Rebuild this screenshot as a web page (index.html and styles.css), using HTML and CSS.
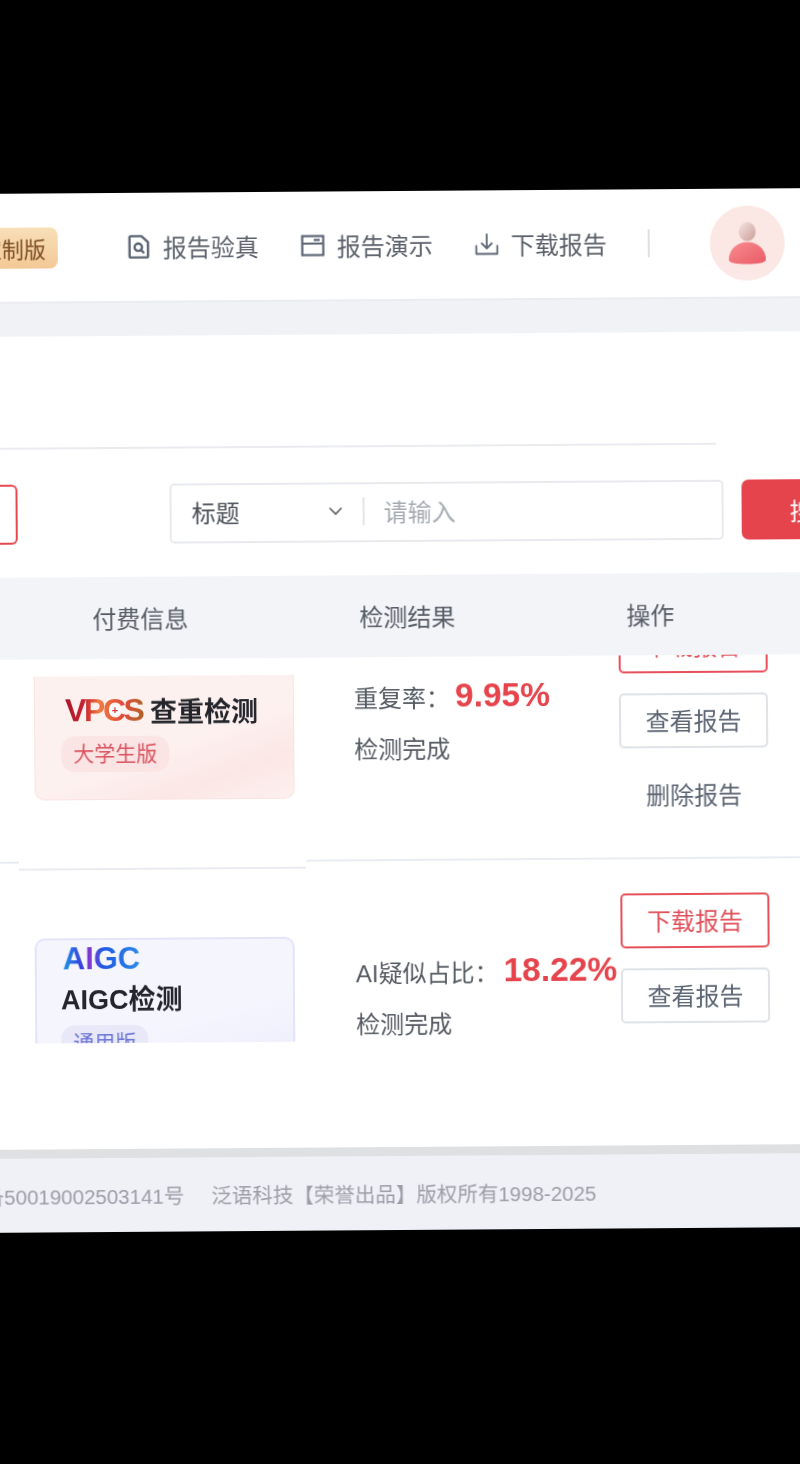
FILE: index.html
```html
<!DOCTYPE html>
<html lang="zh-CN">
<head>
<meta charset="utf-8">
<title>检测报告</title>
<link rel="stylesheet" href="styles.css">
</head>
<body>
<div class="frame">
  <header class="header">
    <div class="badge"><span>定制版</span></div>
    <nav class="nav">
      <a class="nav-item">
        <svg class="icon" viewBox="0 0 24 26" fill="none" stroke="#5d6675" stroke-width="2.600" stroke-linejoin="round" stroke-linecap="round"><path d="M3.500 1.500h11.500l7 6.500v15a1.500 1.500 0 0 1-1.500 1.500h-17A1.500 1.500 0 0 1 2 23V3a1.500 1.500 0 0 1 1.500-1.500z"/><circle cx="11.500" cy="13.500" r="4"/><path d="M14.500 16.500l2.500 2.500"/></svg>
        <span>报告验真</span>
      </a>
      <a class="nav-item">
        <svg class="icon" viewBox="0 0 24 22" fill="none" stroke="#5d6675" stroke-width="2.200"><rect x="1.500" y="1.500" width="21" height="19"/><path d="M1.500 9h21M13 5.300h6"/></svg>
        <span>报告演示</span>
      </a>
      <a class="nav-item">
        <svg class="icon" viewBox="0 0 24 22" fill="none" stroke="#5d6675" stroke-width="1.800" stroke-linecap="round" stroke-linejoin="round"><path d="M12 1v13.500M7 10l5 5 5-5M1.500 12.500v8h21v-8"/></svg>
        <span>下载报告</span>
      </a>
    </nav>
    <div class="nav-divider"></div>
    <div class="avatar">
      <svg viewBox="0 0 75 75" class="avatar-art">
        <defs>
          <linearGradient id="head" x1="0" y1="0" x2="1" y2="1"><stop offset="0" stop-color="#f6e6e2"/><stop offset="1" stop-color="#c99c98"/></linearGradient>
          <linearGradient id="bodyg" x1="0" y1="0" x2="1" y2="1"><stop offset="0" stop-color="#f78d8f"/><stop offset="1" stop-color="#ea5a66"/></linearGradient>
        </defs>
        <ellipse cx="37.500" cy="26" rx="8.500" ry="9.500" fill="url(#head)"/>
        <path d="M19 54C19 44 27 36.500 37.500 36.500S56 44 56 54C56 57.500 48 58.500 37.500 58.500S19 57.500 19 54z" fill="url(#bodyg)"/>
      </svg>
    </div>
  </header>
  <div class="band"></div>
  <section class="panel">
    <div class="title-area"></div>
    <div class="filters">
      <div class="status-box"></div>
      <div class="search-box">
        <div class="select"><span>标题</span>
          <svg class="chevron" viewBox="0 0 14 9" fill="none" stroke="#555b63" stroke-width="1.600"><path d="M1 1.500l6 6 6-6"/></svg>
        </div>
        <div class="input-divider"></div>
        <span class="placeholder">请输入</span>
      </div>
      <button class="search-btn">搜索</button>
    </div>
    <div class="thead">
      <span class="th">付费信息</span>
      <span class="th">检测结果</span>
      <span class="th">操作</span>
    </div>
    <div class="tbody">
      <article class="row row-first">
        <div class="col-card">
          <div class="card card-red">
            <div class="card-title-line">
              <span class="logo-vpcs">VPCS<i class="logo-plus">+</i></span>
              <span class="card-title">查重检测</span>
            </div>
            <span class="pill pill-red">大学生版</span>
          </div>
        </div>
        <div class="col-result">
          <div class="result-line"><span>重复率：</span><strong class="rate">9.95%</strong></div>
          <div class="result-status">检测完成</div>
        </div>
        <div class="col-actions col-actions-cut">
          <a class="btn btn-red">下载报告</a>
          <a class="btn btn-gray">查看报告</a>
          <a class="btn-text">删除报告</a>
        </div>
      </article>
      <article class="row row-second">
        <div class="col-card">
          <div class="card card-blue">
            <div class="logo-aigc">AIGC</div>
            <div class="card-title card-title-big">AIGC检测</div>
            <span class="pill pill-blue">通用版</span>
          </div>
        </div>
        <div class="col-result">
          <div class="result-line"><span>AI疑似占比：</span><strong class="rate">18.22%</strong></div>
          <div class="result-status">检测完成</div>
        </div>
        <div class="col-actions">
          <a class="btn btn-red">下载报告</a>
          <a class="btn btn-gray">查看报告</a>
        </div>
      </article>
    </div>
  </section>
  <footer class="footer">
    <div class="footer-text"><span>公网安备50019002503141号</span><span>泛语科技【荣誉出品】版权所有1998-2025</span></div>
  </footer>
</div>
</body>
</html>
```
FILE: styles.css
```css
* { box-sizing: border-box; }
html, body { margin: 0; padding: 0; background: #000; }
body {
  height: 1464px;
  overflow: hidden;
  font-family: "Liberation Sans", "Noto Sans CJK SC", sans-serif;
  color: #555a62;
}
.frame {
  width: 820px;
  height: 1039px;
  margin: 191px 0 0 -10px;
  background: #fff;
  overflow: hidden;
  transform: rotate(-0.4deg);
  filter: blur(0.6px);
  display: flex;
  flex-direction: column;
}
.header {
  height: 110px;
  flex: none;
  display: flex;
  align-items: center;
  border-bottom: 2px solid #eaecef;
}
.badge {
  width: 71px;
  height: 41px;
  flex: none;
  padding-right: 12px;
  display: flex;
  align-items: center;
  justify-content: flex-end;
  border-radius: 0 8px 8px 0;
  background: linear-gradient(180deg, #f8dfb8, #f3c896);
  color: #7b4d22;
  font-size: 22px;
  white-space: nowrap;
}
.nav { display: flex; gap: 42px; margin-left: 69px; }
.nav-item { display: flex; align-items: center; gap: 12px; font-size: 24px; color: #5b606a; }
.nav-item span { margin-bottom: 2px; }
.icon { width: 24px; height: 24px; flex: none; }
.nav-divider { width: 2px; height: 28px; margin-left: 41px; background: #dcdfe4; flex: none; }
.avatar { width: 75px; height: 75px; margin-left: 60px; border-radius: 50%; background: #fbe7e4; flex: none; }
.avatar-art { display: block; width: 75px; height: 75px; }
.band { height: 33px; flex: none; background: #f1f2f5; }
.panel { flex: 1; display: flex; flex-direction: column; min-height: 0; }
.title-area { width: 728px; height: 113px; flex: none; border-bottom: 2px solid #e9ebef; }
.filters {
  height: 128px;
  flex: none;
  padding-top: 35px;
  display: flex;
  align-items: flex-start;
}
.status-box { width: 29px; height: 60px; border: 2px solid #e5484f; border-left: 0; border-radius: 0 6px 6px 0; flex: none; }
.search-box {
  width: 554px;
  height: 60px;
  margin-left: 152px;
  padding-bottom: 3px;
  flex: none;
  display: flex;
  align-items: center;
  border: 2px solid #e8eaee;
  border-radius: 5px;
  font-size: 24px;
}
.select { width: 191px; padding-left: 20px; display: flex; align-items: center; justify-content: space-between; padding-right: 20px; color: #4a4f57; }
.chevron { width: 14px; height: 9px; flex: none; }
.input-divider { width: 2px; height: 28px; background: #e3e5e9; flex: none; }
.placeholder { margin-left: 19px; color: #a6abb3; }
.search-btn {
  width: 70px;
  height: 60px;
  margin-left: 18px;
  padding: 0 0 0 48px;
  flex: none;
  border: 0;
  border-radius: 7px 0 0 7px;
  background: #e5444c;
  color: #fff;
  font: 24px "Liberation Sans", "Noto Sans CJK SC", sans-serif;
  text-align: left;
  white-space: nowrap;
  overflow: hidden;
}
.thead {
  height: 82px;
  flex: none;
  padding: 0 0 2px 103px;
  display: flex;
  align-items: center;
  background: #f2f4f8;
  font-size: 24px;
  color: #565b64;
}
.th { width: 267px; flex: none; }
.tbody { flex: 1; min-height: 0; }
.row { display: flex; align-items: flex-start; }
.row-first { height: 204px; border-bottom: 2px solid #eaecf3; }
.row-second { height: 287px; }
.col-card { width: 287px; margin-left: 28px; flex: none; padding-left: 16px; }
.row-first .col-card { height: 211px; padding-top: 17px; border-bottom: 2px solid #e9ebf0; background: #fff; }
.row-second .col-card { padding-top: 75px; padding-left: 15px; height: 180px; overflow: hidden; }
.card { width: 260px; }
.card-red {
  height: 124px;
  padding: 19px 0 0 30px;
  border: 1px solid #fae3e2;
  border-top: 0;
  border-radius: 0 0 10px 10px;
  background: linear-gradient(160deg, #fdf1f0 55%, #fbe7e6 78%, #fdf0ef 100%);
}
.card-blue {
  height: 140px;
  padding: 7px 0 0 26px;
  border: 2px solid #e4e3f8;
  border-radius: 10px 10px 0 0;
  background: linear-gradient(165deg, #f5f5fe 60%, #ecebfb 100%);
}
.card-title-line { display: flex; align-items: center; height: 30px; }
.logo-vpcs {
  position: relative;
  width: 85px;
  flex: none;
  font: bold 32px/30px "Liberation Sans", sans-serif;
  letter-spacing: -2.400px;
  background: linear-gradient(90deg, #a8162a 0%, #c8242f 24%, #ee7c42 40%, #e04a3a 68%, #a06a20 100%);
  -webkit-background-clip: text;
  background-clip: text;
  color: transparent;
}
.logo-plus {
  position: absolute;
  left: 44px;
  top: 9px;
  width: 12px;
  height: 12px;
  border-radius: 50%;
  background: #fff;
  color: #d9363e;
  font: bold 11px/12px "Liberation Sans", sans-serif;
  letter-spacing: 0;
  text-align: center;
  -webkit-text-fill-color: #d9363e;
}
.card-title { font-size: 27px; font-weight: 700; color: #23252b; white-space: nowrap; }
.card-title-big { font-size: 27px; line-height: 38px; margin: 10px 0 0 -2px; }
.pill {
  display: inline-block;
  height: 36px;
  margin-top: 11px;
  margin-left: -4px;
  padding: 0 12px;
  border-radius: 14px;
  font-size: 21px;
  line-height: 36px;
}
.pill-red { background: #fbe4e4; color: #d9535f; }
.pill-blue { margin: 6px 0 0 -2px; background: #e8e8f9; color: #6c74d4; }
.logo-aigc {
  width: max-content;
  font: bold 31px/24px "Liberation Sans", sans-serif;
  background: linear-gradient(90deg, #1c9be8 0%, #3a36dd 26%, #8a3bcf 36%, #2058e2 50%, #2a8ae8 100%);
  -webkit-background-clip: text;
  background-clip: text;
  color: transparent;
}
.col-result { width: 314px; flex: none; padding-left: 49px; font-size: 24px; color: #555a62; }
.row-first .col-result { padding-top: 19px; }
.row-second .col-result { padding-top: 90px; }
.result-line { display: flex; align-items: baseline; height: 40px; line-height: 40px; white-space: nowrap; }
.rate { margin-left: 5px; font-size: 33.500px; font-weight: 700; color: #e5444c; }
.result-status { margin-top: 14px; line-height: 40px; }
.col-actions { width: 149px; flex: none; display: flex; flex-direction: column; gap: 20px; }
.col-actions-cut { height: 202px; overflow: hidden; }
.col-actions-cut .btn:first-child { margin-top: -37px; }
.row-second .col-actions { padding-top: 34px; }
.btn {
  height: 55px;
  flex: none;
  padding-bottom: 3px;
  display: flex;
  align-items: center;
  justify-content: center;
  border-radius: 5px;
  font-size: 24px;
}
.btn-red { border: 2px solid #e5505a; color: #e0505a; }
.btn-gray { border: 2px solid #dfe2e6; color: #5c6573; }
.btn-text { margin-top: 12px; text-align: center; font-size: 24px; line-height: 32px; color: #5c6573; }
.footer {
  height: 83px;
  flex: none;
  border-top: 9px solid #dfe0e1;
  background: #f0f1f6;
  display: flex;
  align-items: center;
}
.footer-text {
  width: 603px;
  flex: none;
  display: flex;
  justify-content: flex-end;
  gap: 27px;
  font-size: 20.500px;
  color: #9a9ea8;
  white-space: nowrap;
}
```
